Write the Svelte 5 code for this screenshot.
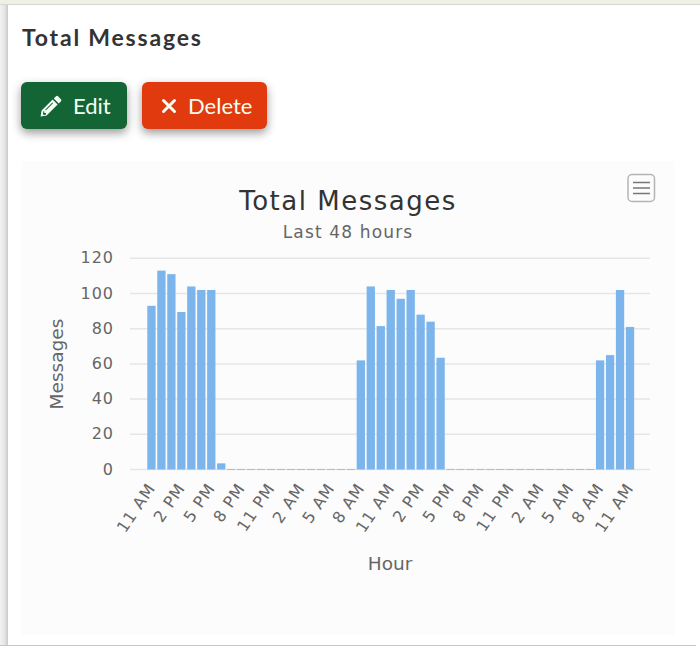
<script>
  const ticks = [120, 100, 80, 60, 40, 20, 0];
  const hours = ["11 AM", "2 PM", "5 PM", "8 PM", "11 PM", "2 AM", "5 AM", "8 AM", "11 AM", "2 PM", "5 PM", "8 PM", "11 PM", "2 AM", "5 AM", "8 AM", "11 AM"];
  const values = [
    93, 113, 111, 89.5, 104, 102, 102, 3.5, 0, 0, 0, 0, 0, 0, 0, 0, 0, 0, 0, 0, 0,
    62, 104, 81.5, 102, 97, 102, 88, 84, 63.5, 0, 0, 0, 0, 0, 0, 0, 0, 0, 0, 0, 0, 0, 0, 0,
    62, 65, 102, 81
  ];

  const baseY = 469.5;
  const perUnit = 1.76;
  const yFor = (v) => baseY - v * perUnit;
</script>

<div class="strip"></div>
<div class="frame">
  <div class="gutter"></div>
  <div class="card">
    <h2>Total Messages</h2>
    <div class="actions">
      <button class="btn edit">
        <svg class="icon" viewBox="0 0 22 22" aria-hidden="true">
          <path fill="currentColor" fill-rule="evenodd" d="M16 1.2 Q17 0.4 18 1.2 L21 4.2 Q21.8 5.2 21 6.2 L18.8 8.4 L13.8 3.4 Z M12.6 4.6 L17.6 9.6 L6.6 20.6 L0.6 21.6 L1.6 15.6 Z M3.4 16.2 L2.9 19.2 L3.9 20.1 L6 19.6 L6 18 L4.3 18 L4.3 16.2 Z M12.4 7.6 L5.2 14.8 L5.8 15.4 L13 8.2 Z" />
        </svg>
        Edit
      </button>
      <button class="btn delete">
        <svg class="icon small" viewBox="0 0 16 16" aria-hidden="true">
          <path d="M2.5 2.5 L13.5 13.5 M13.5 2.5 L2.5 13.5" stroke="currentColor" stroke-width="3" stroke-linecap="round" fill="none" />
        </svg>
        Delete
      </button>
    </div>

    <div class="chart">
      <svg width="652" height="474" viewBox="22 161 652 474">
        <text class="title" x="348" y="210" text-anchor="middle">Total Messages</text>
        <text class="subtitle" x="348" y="237.5" text-anchor="middle">Last 48 hours</text>

        <g class="menu">
          <rect x="628" y="174.5" width="26.5" height="27" rx="4" />
          <path d="M633 182.5h17M633 188h17M633 193.5h17" />
        </g>

        {#each ticks as t}
          <line class="grid" x1="130" x2="650" y1={yFor(t)} y2={yFor(t)} />
          <text class="tick" x="114" y={yFor(t) + 5} text-anchor="end">{t}</text>
        {/each}

        {#each values as v, i}
          {#if v > 0}
            <rect class="bar" x={147.3 + i * 9.97} y={yFor(v)} width="8.3" height={v * perUnit} />
          {:else}
            <rect class="zero" x={147.3 + i * 9.97} y={baseY - 0.5} width="8.3" height="1" />
          {/if}
        {/each}

        {#each hours as h, i}
          <text class="tick" x={156 + i * 29.9} y="488" text-anchor="end" transform="rotate(-56 {156 + i * 29.9} 488)">{h}</text>
        {/each}

        <text class="axis" x="390" y="569.5" text-anchor="middle">Hour</text>
        <text class="axis" x="63" y="364" text-anchor="middle" transform="rotate(-90 63 364)">Messages</text>
      </svg>
    </div>
  </div>
</div>

<style>
  :global(body) {
    margin: 0;
    background: #fff;
  }

  .strip {
    height: 4px;
    width: 700px;
    background: #f1f0e8;
    border-bottom: 1px solid #d8d8d2;
  }

  .frame {
    display: flex;
    width: 696px;
    height: 640px;
    border-bottom: 1px solid #c6c6c6;
  }

  .gutter {
    width: 8px;
    flex: none;
    background: linear-gradient(to right, #f2f2f2, #e4e4e4 60%, #c9c9c9);
  }

  .card {
    flex: 1;
    padding: 0 22px 0 14px;
    background: #fff;
    border-top-left-radius: 4px;
  }

  h2 {
    margin: 18px 0 0;
    font: 700 23px/28px Lato, sans-serif;
    letter-spacing: 1.8px;
    color: #333;
  }

  .actions {
    display: flex;
    gap: 15px;
    margin: 31px 0 0 -1px;
  }

  .btn {
    display: flex;
    align-items: center;
    height: 47px;
    border: none;
    border-radius: 6px;
    font: 400 22px Lato, sans-serif;
    color: #f4fff4;
    box-shadow: 0 4px 10px rgba(0, 0, 0, 0.4);
    padding: 0 0 0 19px;
  }

  .edit {
    width: 106px;
    gap: 11px;
    background: #146535;
  }

  .delete {
    width: 125px;
    gap: 11px;
    background: #e13a0e;
  }

  .icon {
    width: 22px;
    height: 22px;
  }

  .icon.small {
    width: 16px;
    height: 16px;
  }

  .chart {
    margin-top: 32px;
    width: 652px;
    height: 474px;
    background: #fcfcfc;
  }

  .chart svg {
    display: block;
  }

  text {
    font-family: "DejaVu Sans", sans-serif;
  }

  .title {
    font-size: 26px;
    letter-spacing: 1.5px;
    fill: #333;
  }

  .subtitle {
    font-size: 17px;
    letter-spacing: 1.15px;
    fill: #666;
  }

  .tick {
    font-size: 16px;
    letter-spacing: 1px;
    fill: #666;
  }

  .axis {
    font-size: 18.5px;
    fill: #666;
  }

  .grid {
    stroke: #e6e6e6;
    stroke-width: 1.5;
  }

  .bar {
    fill: #7cb5ec;
  }

  .zero {
    fill: #b4bcc4;
  }

  .menu rect {
    fill: none;
    stroke: #b5b5b5;
    stroke-width: 1.5;
  }

  .menu path {
    stroke: #777;
    stroke-width: 1.5;
    fill: none;
  }
</style>
